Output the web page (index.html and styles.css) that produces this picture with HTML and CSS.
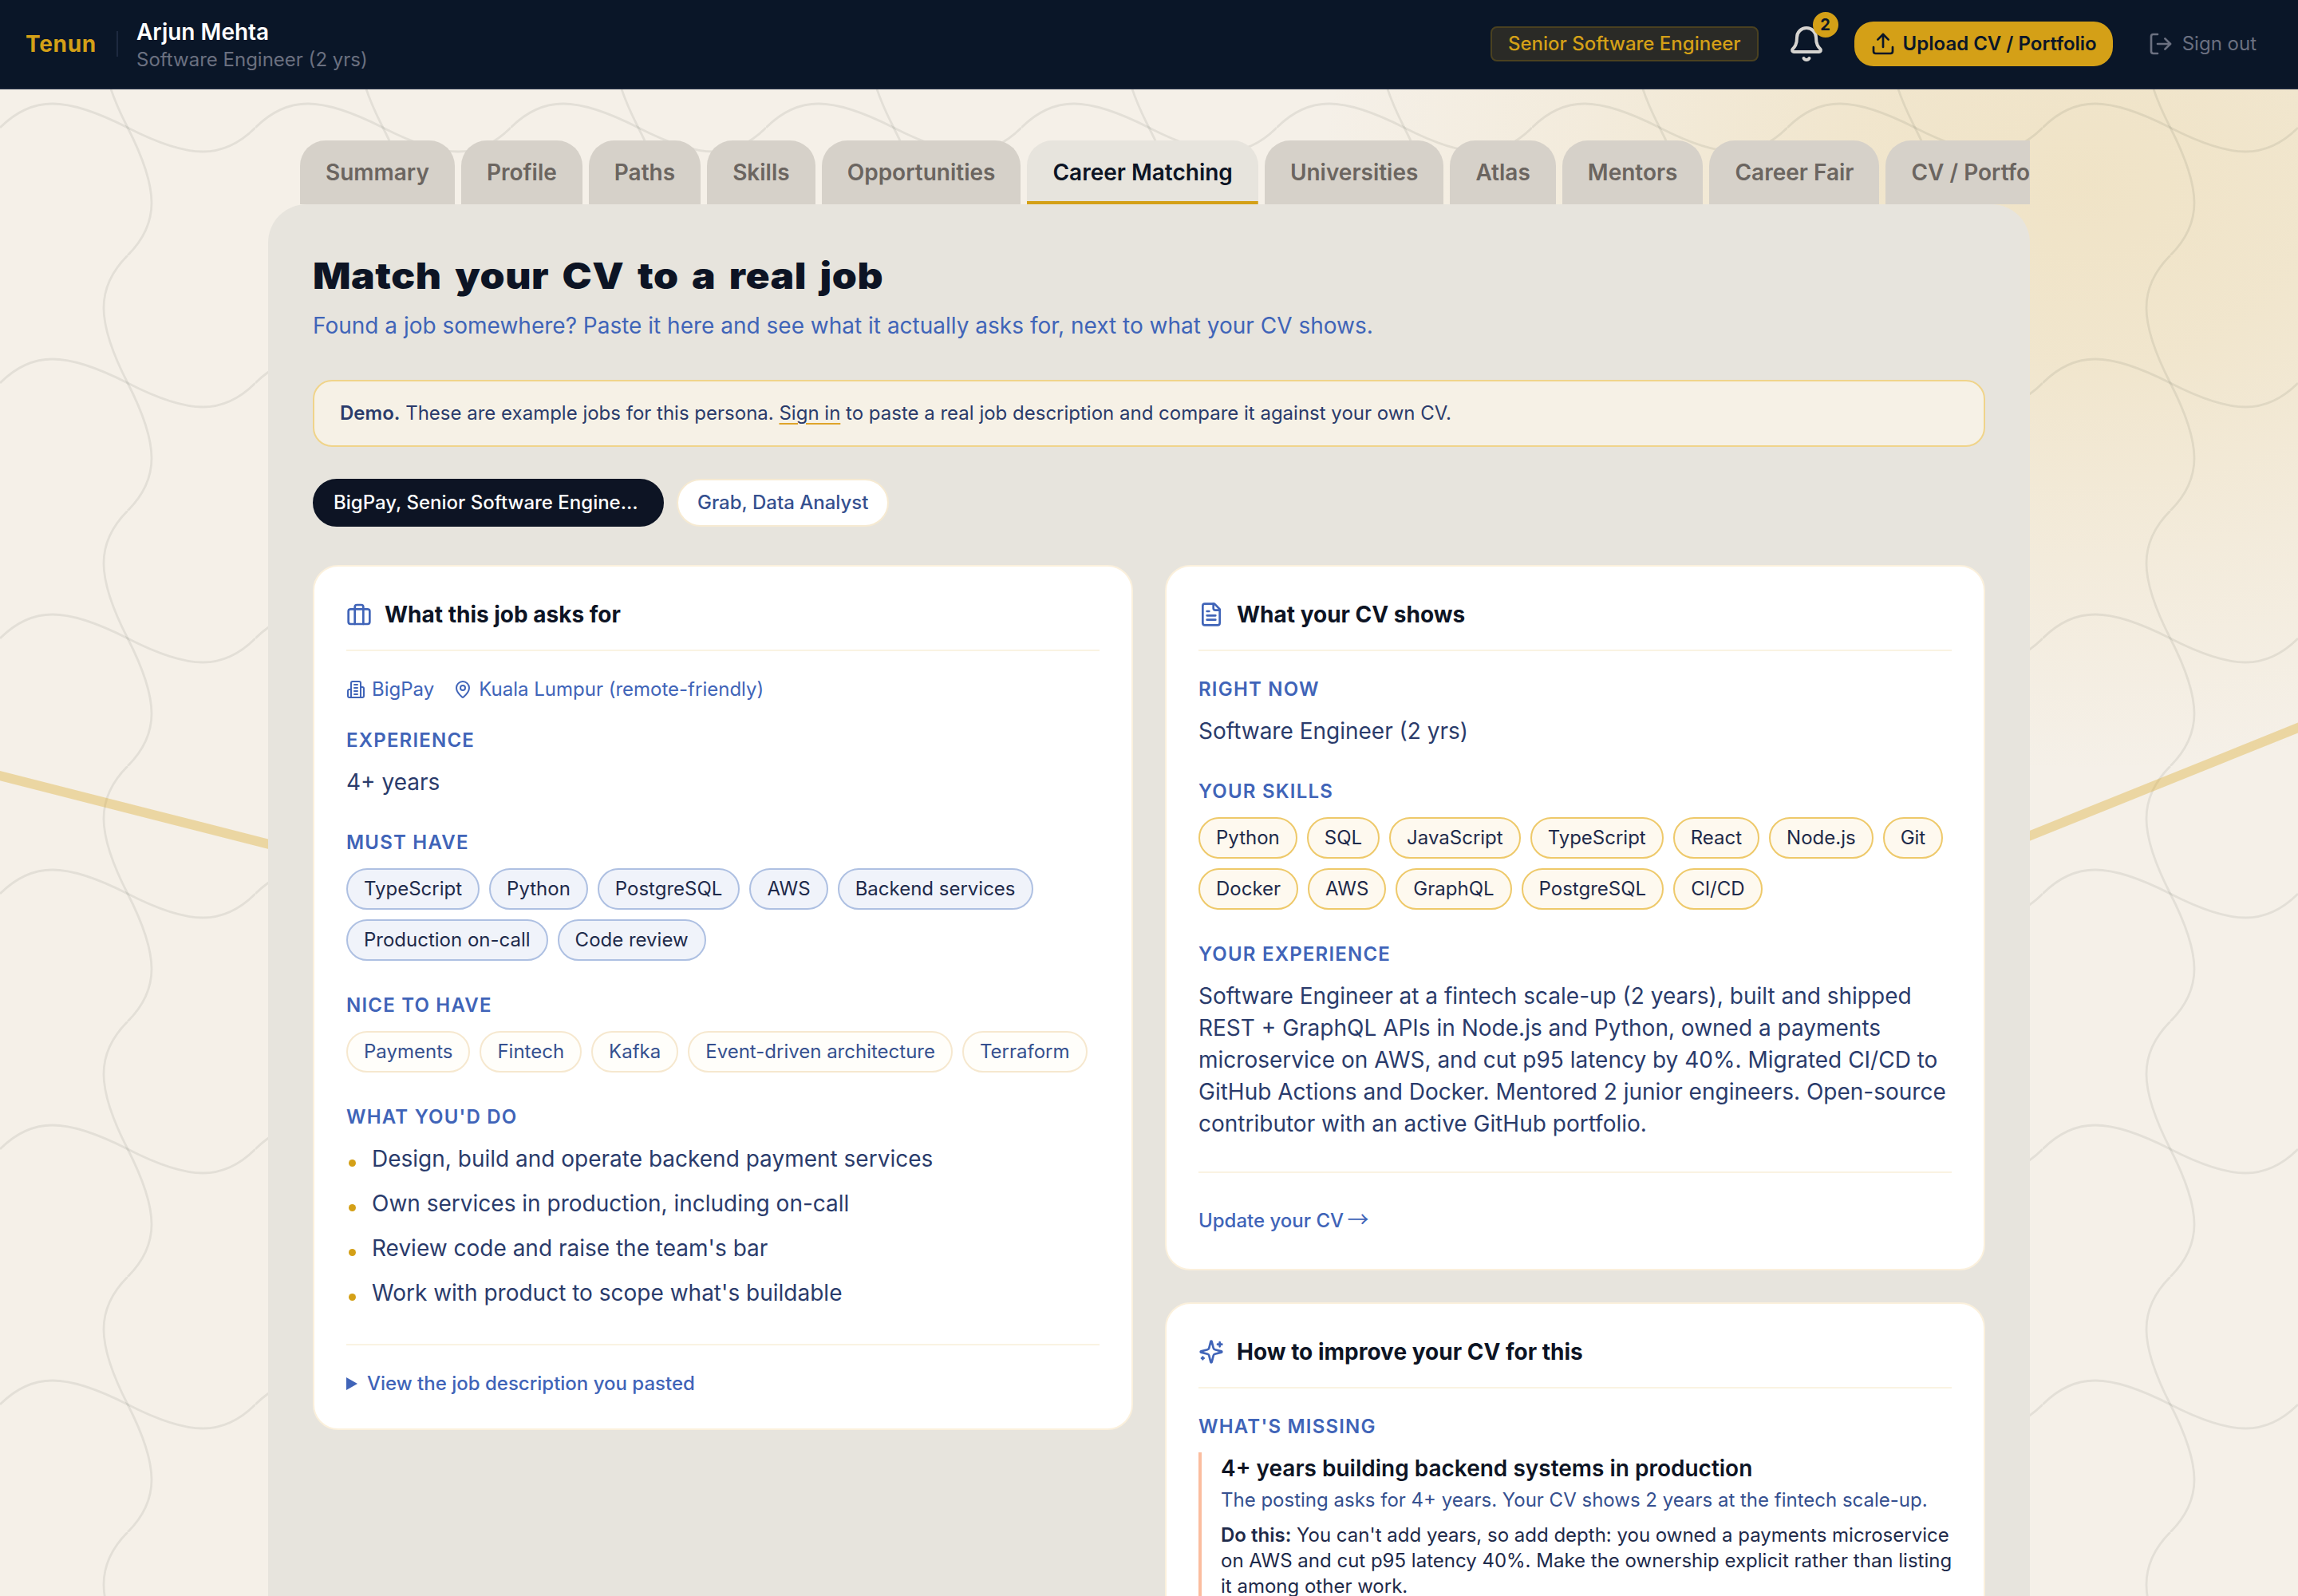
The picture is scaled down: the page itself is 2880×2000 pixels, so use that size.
FILE: index.html
```html
<!DOCTYPE html>
<html lang="en">
<head>
<meta charset="utf-8">
<title>Tenun</title>
<link rel="stylesheet" href="styles.css">
</head>
<body>
<svg class="backdrop" viewBox="0 0 2880 2000" aria-hidden="true">
  <defs>
    <pattern id="weave" width="320" height="320" patternUnits="userSpaceOnUse">
      <g transform="scale(2)" fill="none" stroke="#0a1608" stroke-opacity=".08" stroke-width="1.4">
        <path d="M0 80C20 60 41 60 80 80S140 100 160 80"/>
        <path d="M80 0C60 20 60 41 80 80S100 140 80 160"/>
      </g>
    </pattern>
  </defs>
  <rect width="2880" height="2000" fill="url(#weave)"/>
  <g fill="none" stroke="#dba520" stroke-opacity=".35" stroke-width="12">
    <path d="M-20 967L400 1074"/>
    <path d="M2480 1073L2900 904"/>
  </g>
</svg>

<header class="nav">
  <div class="brand">Tenun</div>
  <div class="nav-divider"></div>
  <div class="who">
    <div class="who-name">Arjun Mehta</div>
    <div class="who-role">Software Engineer (2 yrs)</div>
  </div>
  <div class="nav-actions">
    <span class="target">Senior Software Engineer</span>
    <div class="bell">
      <svg class="icon i48" viewBox="0 0 24 24"><path d="M10.268 21a2 2 0 0 0 3.464 0"/><path d="M3.262 15.326A1 1 0 0 0 4 17h16a1 1 0 0 0 .74-1.673C19.41 13.956 18 12.499 18 8A6 6 0 0 0 6 8c0 4.499-1.411 5.956-2.738 7.326"/></svg>
      <span class="bell-count">2</span>
    </div>
    <div class="upload">
      <svg class="icon i32" viewBox="0 0 24 24"><path d="M12 3v12"/><path d="m17 8-5-5-5 5"/><path d="M21 15v4a2 2 0 0 1-2 2H5a2 2 0 0 1-2-2v-4"/></svg>
      <span>Upload CV / Portfolio</span>
    </div>
    <div class="signout">
      <svg class="icon i32" viewBox="0 0 24 24"><path d="m16 17 5-5-5-5"/><path d="M21 12H9"/><path d="M9 21H5a2 2 0 0 1-2-2V5a2 2 0 0 1 2-2h4"/></svg>
      <span>Sign out</span>
    </div>
  </div>
</header>

<main class="shell">
  <nav class="tabs">
    <a class="tab">Summary</a>
    <a class="tab">Profile</a>
    <a class="tab">Paths</a>
    <a class="tab">Skills</a>
    <a class="tab">Opportunities</a>
    <a class="tab tab-active">Career Matching</a>
    <a class="tab">Universities</a>
    <a class="tab">Atlas</a>
    <a class="tab">Mentors</a>
    <a class="tab">Career Fair</a>
    <a class="tab">CV / Portfolio</a>
  </nav>

  <section class="panel">
    <h1 class="title">Match your CV to a real job</h1>
    <p class="subtitle">Found a job somewhere? Paste it here and see what it actually asks for, next to what your CV shows.</p>
    <div class="notice"><b>Demo.</b> These are example jobs for this persona. <a class="notice-link">Sign in</a> to paste a real job description and compare it against your own CV.</div>

    <div class="jobs">
      <div class="job job-active">BigPay, Senior Software Engine…</div>
      <div class="job">Grab, Data Analyst</div>
    </div>

    <div class="columns">
      <div class="column">
        <article class="card">
          <header class="card-head">
            <svg class="icon i32" viewBox="0 0 24 24"><path d="M16 21V5a2 2 0 0 0-2-2h-4a2 2 0 0 0-2 2v16"/><rect x="2" y="7" width="20" height="14" rx="2"/></svg>
            <h2>What this job asks for</h2>
          </header>
          <div class="meta">
            <span class="meta-item"><svg class="icon i24" viewBox="0 0 24 24"><path d="M6 22V4a2 2 0 0 1 2-2h8a2 2 0 0 1 2 2v18Z"/><path d="M6 12H4a2 2 0 0 0-2 2v6a2 2 0 0 0 2 2h2"/><path d="M18 9h2a2 2 0 0 1 2 2v9a2 2 0 0 1-2 2h-2"/><path d="M10 6h4M10 10h4M10 14h4M10 18h4"/></svg>BigPay</span>
            <span class="meta-item"><svg class="icon i24" viewBox="0 0 24 24"><path d="M20 10c0 4.993-5.539 10.193-7.399 11.799a1 1 0 0 1-1.202 0C9.539 20.193 4 14.993 4 10a8 8 0 0 1 16 0"/><circle cx="12" cy="10" r="3"/></svg>Kuala Lumpur (remote-friendly)</span>
          </div>
          <div class="group">
            <h3>EXPERIENCE</h3>
            <p>4+ years</p>
          </div>
          <div class="group">
            <h3>MUST HAVE</h3>
            <div class="chips chips-must"><span>TypeScript</span><span>Python</span><span>PostgreSQL</span><span>AWS</span><span>Backend services</span><span>Production on-call</span><span>Code review</span></div>
          </div>
          <div class="group">
            <h3>NICE TO HAVE</h3>
            <div class="chips chips-nice"><span>Payments</span><span>Fintech</span><span>Kafka</span><span>Event-driven architecture</span><span>Terraform</span></div>
          </div>
          <div class="group">
            <h3>WHAT YOU'D DO</h3>
            <ul class="duties">
              <li>Design, build and operate backend payment services</li>
              <li>Own services in production, including on-call</li>
              <li>Review code and raise the team's bar</li>
              <li>Work with product to scope what's buildable</li>
            </ul>
          </div>
          <div class="disclosure"><i class="caret"></i>View the job description you pasted</div>
        </article>
      </div>

      <div class="column">
        <article class="card">
          <header class="card-head">
            <svg class="icon i32" viewBox="0 0 24 24"><path d="M15 2H6a2 2 0 0 0-2 2v16a2 2 0 0 0 2 2h12a2 2 0 0 0 2-2V7Z"/><path d="M14 2v4a2 2 0 0 0 2 2h4"/><path d="M10 9H8M16 13H8M16 17H8"/></svg>
            <h2>What your CV shows</h2>
          </header>
          <div class="group group-first">
            <h3>RIGHT NOW</h3>
            <p>Software Engineer (2 yrs)</p>
          </div>
          <div class="group">
            <h3>YOUR SKILLS</h3>
            <div class="chips chips-own"><span>Python</span><span>SQL</span><span>JavaScript</span><span>TypeScript</span><span>React</span><span>Node.js</span><span>Git</span><span>Docker</span><span>AWS</span><span>GraphQL</span><span>PostgreSQL</span><span>CI/CD</span></div>
          </div>
          <div class="group">
            <h3>YOUR EXPERIENCE</h3>
            <p>Software Engineer at a fintech scale-up (2 years), built and shipped REST + GraphQL APIs in Node.js and Python, owned a payments microservice on AWS, and cut p95 latency by 40%. Migrated CI/CD to GitHub Actions and Docker. Mentored 2 junior engineers. Open-source contributor with an active GitHub portfolio.</p>
          </div>
          <div class="update">Update your CV <span class="arrow">→</span></div>
        </article>

        <article class="card">
          <header class="card-head">
            <svg class="icon i32" viewBox="0 0 24 24"><path d="M9.937 15.5A2 2 0 0 0 8.5 14.063l-6.135-1.582a.5.5 0 0 1 0-.962L8.5 9.936A2 2 0 0 0 9.937 8.5l1.582-6.135a.5.5 0 0 1 .963 0L14.063 8.5A2 2 0 0 0 15.5 9.937l6.135 1.581a.5.5 0 0 1 0 .964L15.5 14.063a2 2 0 0 0-1.437 1.437l-1.582 6.135a.5.5 0 0 1-.963 0z"/><path d="M20 3v4M22 5h-4M4 17v2M5 18H3"/></svg>
            <h2>How to improve your CV for this</h2>
          </header>
          <div class="group group-first">
            <h3>WHAT'S MISSING</h3>
            <div class="gap">
              <h4>4+ years building backend systems in production</h4>
              <p class="gap-why">The posting asks for 4+ years. Your CV shows 2 years at the fintech scale-up.</p>
              <p class="gap-do"><b>Do this:</b> You can't add years, so add depth: you owned a payments microservice on AWS and cut p95 latency 40%. Make the ownership explicit rather than listing it among other work.</p>
            </div>
          </div>
        </article>
      </div>
    </div>
  </section>
</main>
</body>
</html>
```
FILE: styles.css
```css
* { box-sizing: border-box; margin: 0; padding: 0; }

body {
  position: relative;
  width: 2880px;
  height: 2000px;
  overflow: hidden;
  font-family: Inter, "Liberation Sans", sans-serif;
  font-size: 28px;
  line-height: 40px;
  color: #2a3b6b;
  background:
    radial-gradient(ellipse 960px 740px at 2610px 230px, rgba(212, 160, 23, .16), rgba(212, 160, 23, .13) 30%, rgba(212, 160, 23, .06) 65%, rgba(212, 160, 23, 0)),
    #f5f0e8;
}

.backdrop { position: absolute; left: 0; top: 0; width: 2880px; height: 2000px; }

.icon { flex: none; fill: none; stroke: currentColor; stroke-width: 2; stroke-linecap: round; stroke-linejoin: round; }
.i24 { width: 24px; height: 24px; }
.i32 { width: 32px; height: 32px; }
.i48 { width: 48px; height: 48px; }

/* top bar */
.nav {
  position: relative;
  display: flex;
  align-items: center;
  height: 112px;
  padding: 0 32px;
  background: #0a1628;
  border-bottom: 2px solid #172236;
}
.brand { font-weight: 700; letter-spacing: .7px; color: #d4a017; }
.nav-divider { width: 2px; height: 32px; margin: 0 23px 0 25px; background: #1d2940; }
.who { padding-top: 4px; }
.who-name { line-height: 36px; font-weight: 600; color: #fff; }
.who-role { font-size: 24px; line-height: 34px; color: #6b7080; }
.nav-actions { display: flex; align-items: center; gap: 24px; margin-left: auto; font-size: 24px; }
.target {
  height: 44px;
  padding: 0 20px;
  line-height: 40px;
  font-weight: 500;
  color: #d4a017;
  background: #2a2a26;
  border: 2px solid #4a4120;
  border-radius: 8px;
}
.bell { position: relative; display: flex; align-items: center; justify-content: center; width: 72px; height: 72px; color: #d6d4d0; }
.bell-count {
  position: absolute;
  top: -4px;
  right: -4px;
  width: 32px;
  height: 32px;
  border-radius: 50%;
  background: #d4a017;
  color: #0a1628;
  font-size: 20px;
  font-weight: 700;
  line-height: 32px;
  text-align: center;
}
.upload { display: flex; align-items: center; gap: 9px; height: 56px; padding: 0 20px; border-radius: 24px; background: #d4a017; color: #0a1628; font-weight: 600; }
.signout { display: flex; align-items: center; gap: 11px; padding: 0 20px; color: #6b7080; }

/* tabs */
.shell { position: relative; width: 2208px; margin: 64px auto 0; }
.tabs { display: flex; gap: 8px; padding-left: 40px; overflow: hidden; }
.tab {
  flex: none;
  height: 80px;
  padding: 0 32px;
  line-height: 80px;
  font-weight: 600;
  color: #6b6560;
  background: #d6d1c9;
  border-radius: 32px 32px 0 0;
}
.tab-active { color: #0d1424; background: linear-gradient(#d4a017, #d4a017) bottom / 100% 4px no-repeat #e7e4dd; }

/* content panel */
.panel { height: 1800px; padding: 64px 56px; border-radius: 48px 48px 0 0; background: #e7e4dd; }
.title { width: max-content; height: 52px; line-height: 52px; font-size: 45px; font-weight: 900; letter-spacing: .5px; word-spacing: 5.5px; color: #0d1424; transform: scaleX(1.105); transform-origin: left; }
.subtitle { margin-top: 16px; color: #4064b8; }
.notice { height: 84px; margin-top: 48px; padding: 0 32px; border: 2px solid #f0d48a; border-radius: 24px; background: #f6f1e6; font-size: 24px; line-height: 80px; }
.notice b { font-weight: 600; }
.notice-link { text-decoration: underline; text-decoration-color: #dfa42a; text-decoration-thickness: 2px; text-underline-offset: 4px; }

.jobs { display: flex; gap: 16px; margin-top: 40px; }
.job {
  height: 60px;
  padding: 0 24px;
  border: 2px solid #f6ead2;
  border-radius: 30px;
  background: #fff;
  color: #35508f;
  font-size: 24px;
  font-weight: 500;
  line-height: 56px;
  white-space: nowrap;
}
.job-active { width: 440px; background: #0d1424; border-color: #0d1424; color: #fff; }

.columns { display: grid; grid-template-columns: 1fr 1fr; gap: 40px; margin-top: 48px; }
.column { display: flex; flex-direction: column; gap: 40px; }
.card { padding: 40px; border: 2px solid #fbf0dc; border-radius: 32px; background: #fff; }
.card-head { display: flex; align-items: center; gap: 16px; padding-bottom: 24px; border-bottom: 2px solid #faf3e2; color: #4064b8; }
.card-head h2 { font-size: 28px; font-weight: 700; color: #0d1424; }

.meta { display: flex; gap: 24px; margin: 32px 0; font-size: 24px; line-height: 32px; color: #4064b8; }
.meta-item { display: flex; align-items: center; gap: 8px; }

.group + .group { margin-top: 40px; }
.group-first { margin-top: 32px; }
.group h3 { margin-bottom: 16px; font-size: 24px; line-height: 32px; font-weight: 600; letter-spacing: 1.2px; color: #4064b8; }

.chips { display: flex; flex-wrap: wrap; gap: 12px; }
.chips span { height: 52px; padding: 0 20px; border: 2px solid; border-radius: 26px; font-size: 24px; line-height: 48px; }
.chips-must span { color: #1e2a4a; background: #f0f3fa; border-color: #aec0e2; }
.chips-nice span { color: #35508f; background: #fffefa; border-color: #f6e8cf; }
.chips-own span { color: #1e2a4a; background: #fef9ef; border-color: #eec96a; }

.duties { display: flex; flex-direction: column; gap: 16px; list-style: none; }
.duties li { display: flex; align-items: center; gap: 20px; }
.duties li::before { content: ""; width: 9px; height: 9px; margin: 11px 0 0 3px; border-radius: 50%; background: #d4a017; }

.disclosure { display: flex; align-items: center; gap: 12px; margin-top: 44px; padding-top: 32px; border-top: 2px solid #faf3e2; font-size: 24px; font-weight: 500; line-height: 32px; color: #4064b8; }
.caret { width: 14px; height: 16px; background: #4064b8; clip-path: polygon(0 0, 100% 50%, 0 100%); }
.update { height: 82px; margin-top: 40px; padding-top: 40px; border-top: 2px solid #faf3e2; font-size: 24px; font-weight: 500; color: #4064b8; }
.arrow { margin-left: -2px; font-family: "Noto Sans CJK SC", sans-serif; font-size: 27px; font-weight: 400; line-height: 1; }

.gap { padding-left: 24px; border-left: 4px solid #fbbd9f; }
.gap h4 { font-size: 28px; font-weight: 600; color: #0d1424; }
.gap-why { margin-top: 4px; font-size: 24px; line-height: 32px; color: #35508f; }
.gap-do { margin: 12px -4px 0 0; padding-bottom: 40px; font-size: 24px; line-height: 32px; color: #1e2a4a; }
.gap-do b { font-weight: 600; }
```
